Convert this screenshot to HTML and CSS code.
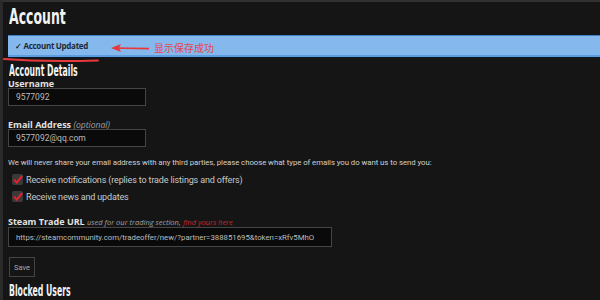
FILE: index.html
```html
<!DOCTYPE html>
<html lang="en">
<head>
  <meta charset="UTF-8">
  <title>Account</title>
  <link rel="stylesheet" href="styles.css">
</head>
<body>
  <div class="page">
    <h1 class="heading big"><span>Account</span></h1>

    <!-- Mensagem de sucesso com anotação vermelha por cima -->
    <div class="notice-wrap">
      <div class="notice">&#10003; Account Updated</div>
      <div class="note">
        <svg class="note-arrow" width="40" height="10" viewBox="0 0 40 10">
          <path d="M3 5 L39 5.6" stroke="#e8383c" stroke-width="1.6" fill="none"/>
          <path d="M1 5 L11 1 L9 5 L11 9 Z" fill="#e8383c"/>
        </svg>
        <span class="note-text">显示保存成功</span>
      </div>
      <svg class="note-line" width="96" height="6" viewBox="0 0 96 6">
        <path d="M1 2 Q40 5 95 3.4" stroke="#e8383c" stroke-width="2" fill="none" stroke-linecap="round"/>
      </svg>
    </div>

    <h2 class="heading mid"><span>Account Details</span></h2>

    <form class="account-form">
      <div class="field">
        <label for="username">Username</label>
        <input type="text" id="username" class="box short" value="9577092">
      </div>

      <div class="field email">
        <label for="email">Email Address <em>(optional)</em></label>
        <input type="text" id="email" class="box short" value="9577092@qq.com">
      </div>

      <p class="hint">We will never share your email address with any third parties, please choose what type of emails you do want us to send you:</p>

      <div class="check">
        <span class="tick"><svg width="10" height="9" viewBox="0 0 10 9"><path d="M1 4.6 L3.8 7.6 L9.2 1" stroke="#e3222c" stroke-width="2" fill="none"/></svg></span>
        <span>Receive notifications (replies to trade listings and offers)</span>
      </div>
      <div class="check">
        <span class="tick"><svg width="10" height="9" viewBox="0 0 10 9"><path d="M1 4.6 L3.8 7.6 L9.2 1" stroke="#e3222c" stroke-width="2" fill="none"/></svg></span>
        <span>Receive news and updates</span>
      </div>

      <div class="field trade">
        <label for="trade">Steam Trade URL <em>used for our trading section,</em> <a href="#" class="red">find yours here</a></label>
        <input type="text" id="trade" class="box long" value="https://steamcommunity.com/tradeoffer/new/?partner=388851695&amp;token=xRfv5MhO">
      </div>

      <button type="button" class="save">Save</button>
    </form>

    <h2 class="heading mid blocked"><span>Blocked Users</span></h2>
  </div>
</body>
</html>
```

FILE: styles.css
```css
/* Geral */
* {
  box-sizing: border-box;
}
body {
  margin: 0;
  background: #151515;
  font-family: 'Open Sans', sans-serif;
  color: #dcdcdc;
  border-top: 2px solid #323232;
  border-left: 3px solid #2a2a2a;
  height: 300px;
  overflow: hidden;
}
.page {
  padding: 0 0 0 5px;
}

/* Títulos condensados */
.heading {
  margin: 0;
  font-family: 'Liberation Sans Narrow', 'DejaVu Sans Condensed', 'Liberation Sans', sans-serif;
  font-weight: bold;
  color: #f2f2f2;
  white-space: nowrap;
}
.heading span {
  display: inline-block;
  transform-origin: left center;
}
.big {
  font-size: 22px;
  line-height: 22px;
  padding: 4px 0 0 1px;
  height: 33px;
}
.big span {
  transform: scaleX(0.63);
}
.mid {
  font-size: 16px;
  line-height: 14px;
  height: 15px;
  padding-left: 1px;
}
.mid span {
  transform: scaleX(0.54);
}

/* Mensagem */
.notice-wrap {
  position: relative;
  height: 29px;
}
.notice {
  height: 22px;
  margin-right: -10px;
  background: #85b8ec;
  border-top: 1px solid #3f7fc4;
  border-bottom: 2px solid #5c9de0;
  box-shadow: 0 1px 0 #0b1a2a;
  padding-left: 7px;
  font-size: 8px;
  font-weight: bold;
  letter-spacing: -0.3px;
  color: #1e2a36;
  line-height: 19px;
}
.note {
  position: absolute;
  left: 102px;
  top: 5px;
  display: flex;
  align-items: center;
  gap: 4px;
}
.note-text {
  font-family: 'Noto Sans CJK SC', sans-serif;
  font-size: 10px;
  color: #e4474b;
}
.note-line {
  position: absolute;
  left: -5px;
  top: 22px;
}

/* Formulário */
.account-form {
  margin: 0;
}
.field label {
  display: block;
  font-size: 9px;
  font-weight: bold;
  color: #e2e2e2;
  line-height: 9px;
  height: 9px;
  white-space: nowrap;
}
.field label em {
  font-weight: normal;
  font-size: 8.6px;
  color: #a0a0a0;
}
.field.trade label em {
  font-size: 7.5px;
}
.field.email {
  margin-top: 14px;
}
.box {
  display: block;
  height: 18px;
  background: #0a0a0a;
  border: 1px solid #454545;
  color: #bdbdbd;
  font-family: 'Roboto', sans-serif;
  font-size: 8.5px;
  padding: 0 6px 0 7px;
}
.short {
  width: 138px;
}
.long {
  width: 324px;
  height: 20px;
  margin-top: 1px;
  font-size: 7.8px;
}
.hint {
  margin: 11px 0 0;
  font-family: 'Roboto', sans-serif;
  font-size: 7.8px;
  letter-spacing: -0.05px;
  color: #d0d0d0;
  line-height: 10px;
  white-space: nowrap;
}
.check {
  display: flex;
  align-items: center;
  gap: 3px;
  height: 11px;
  margin: 6px 0 0 4px;
  font-family: 'Roboto', sans-serif;
  font-size: 9px;
  letter-spacing: -0.15px;
  color: #c9c9c9;
}
.tick {
  width: 11px;
  height: 11px;
  background: #3a3a3a;
  border-radius: 2px;
  display: flex;
  align-items: center;
  justify-content: center;
}
.field.trade {
  margin-top: 15px;
}
.red {
  color: #c9272d;
  font-size: 7.5px;
  font-style: italic;
  font-weight: normal;
  text-decoration: none;
}
.save {
  display: block;
  margin: 10px 0 0 1px;
  width: 26px;
  height: 20px;
  padding: 0;
  background: #151515;
  border: 1px solid #444;
  color: #a8a8a8;
  font-family: 'Roboto', sans-serif;
  font-size: 7.5px;
}
.blocked {
  margin-top: 7px;
}
```
